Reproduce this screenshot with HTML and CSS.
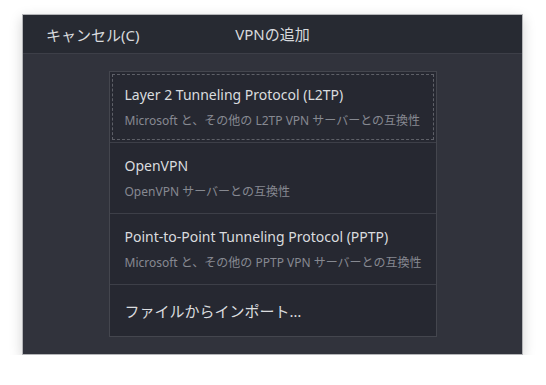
FILE: index.html
```html
<!DOCTYPE html>
<html lang="ja">
<head>
    <meta charset="UTF-8">
    <title>VPNの追加</title>
    <link rel="stylesheet" href="styles.css">
</head>
<body>

    <!-- Dialog -->
    <div class="dialog">
        <div class="dialog-header">
            <span class="cancel">キャンセル(C)</span>
            <span class="title">VPNの追加</span>
        </div>

        <div class="dialog-body">
            <div class="vpn-list">
                <div class="vpn-row">
                    <div class="vpn-focus">
                        <div class="vpn-name">Layer 2 Tunneling Protocol (L2TP)</div>
                        <div class="vpn-desc">Microsoft と、その他の L2TP VPN サーバーとの互換性</div>
                    </div>
                </div>
                <div class="vpn-row">
                    <div class="vpn-inner">
                        <div class="vpn-name">OpenVPN</div>
                        <div class="vpn-desc">OpenVPN サーバーとの互換性</div>
                    </div>
                </div>
                <div class="vpn-row">
                    <div class="vpn-inner">
                        <div class="vpn-name">Point-to-Point Tunneling Protocol (PPTP)</div>
                        <div class="vpn-desc">Microsoft と、その他の PPTP VPN サーバーとの互換性</div>
                    </div>
                </div>
                <div class="vpn-row import-row">
                    <div class="vpn-inner">
                        <div class="vpn-name">ファイルからインポート…</div>
                    </div>
                </div>
            </div>
        </div>
    </div>

</body>
</html>
```

FILE: styles.css
```css
/* General Styles */
body {
    margin: 0;
    padding: 14px 0 0 22px;
    background: #ffffff;
    font-family: "Noto Sans", "Noto Sans CJK JP", sans-serif;
}

/* Dialog Window */
.dialog {
    width: 501px;
    box-sizing: border-box;
    border: 1px solid #b4b5b8;
    background: #31333c;
    box-shadow: 0px 4px 12px rgba(0, 0, 0, 0.18);
}

.dialog-header {
    position: relative;
    height: 38px;
    background: #272a32;
    border-bottom: 1px solid #3d3f48;
    display: flex;
    align-items: center;
    justify-content: center;
    color: #d8dadd;
    font-size: 15px;
}

.title {
    margin-top: -1px;
}

.cancel {
    position: absolute;
    left: 23px;
    top: 9px;
}

/* List of VPN types */
.dialog-body {
    padding: 17px 0;
}

.vpn-list {
    width: 328px;
    box-sizing: border-box;
    margin: 0 auto;
    border: 1px solid #44464e;
    background: #262831;
}

.vpn-row {
    height: 71px;
    box-sizing: border-box;
    border-bottom: 1px solid #3d3f48;
    padding: 2px;
}

.import-row {
    height: 51px;
    border-bottom: none;
}

.vpn-focus,
.vpn-inner {
    height: 100%;
    box-sizing: border-box;
    padding: 10px 0 0 12px;
    border: 1px dashed transparent;
}

.vpn-focus {
    border-color: #5e6068;
}

.import-row .vpn-inner {
    padding-top: 13px;
}

.vpn-name {
    color: #dadcdf;
    font-size: 14px;
    line-height: 20px;
}

.import-row .vpn-name {
    font-size: 15px;
}

.vpn-desc {
    margin-top: 8px;
    color: #868991;
    font-size: 12px;
    line-height: 16px;
}
```
